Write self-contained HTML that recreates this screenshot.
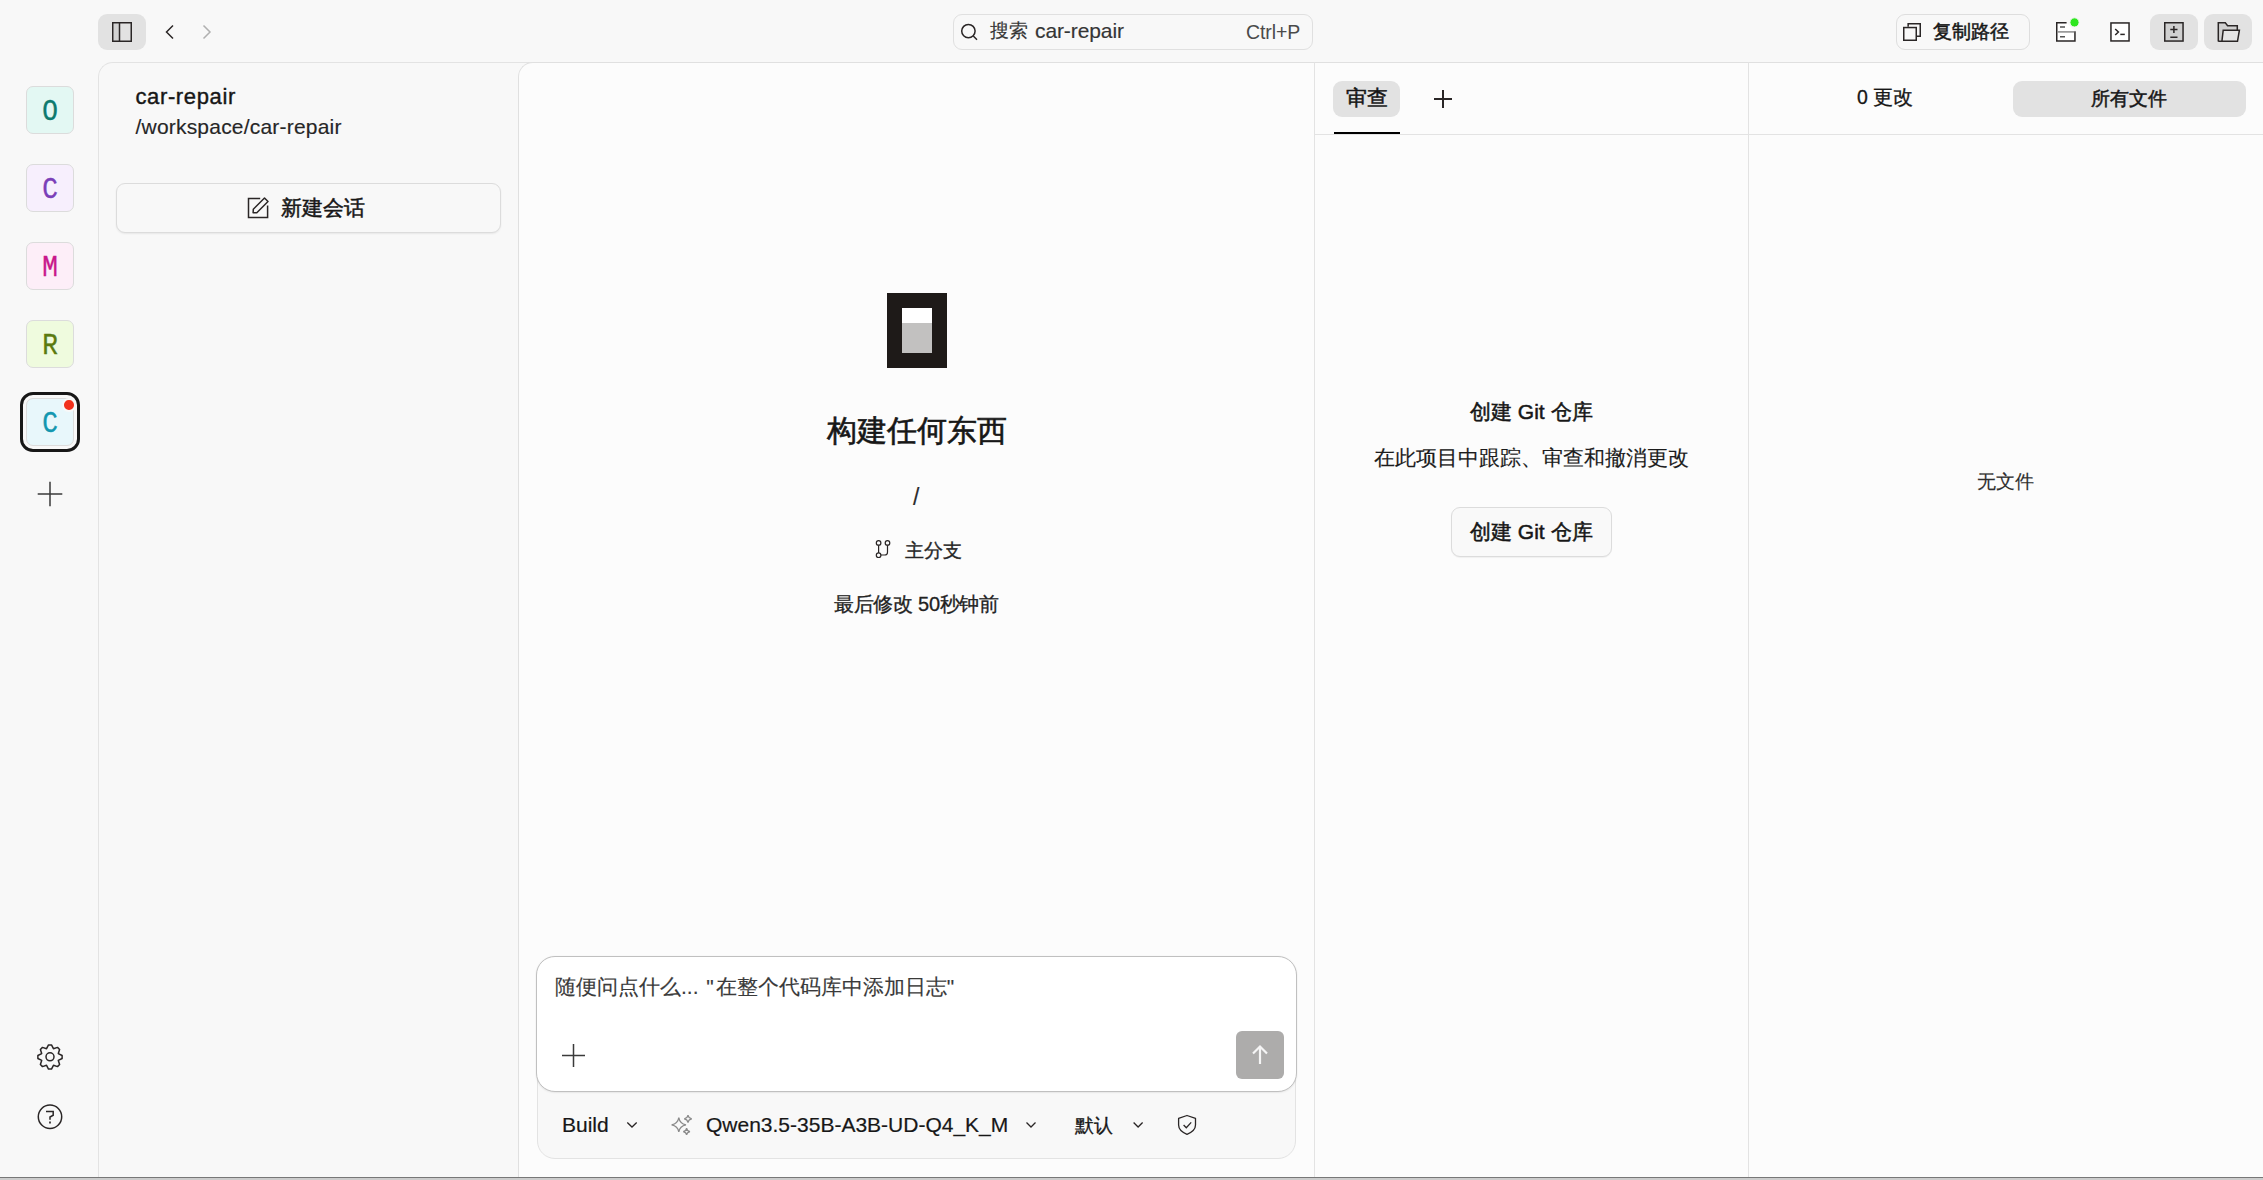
<!DOCTYPE html>
<html><head><meta charset="utf-8">
<style>
html,body{margin:0;padding:0;width:2263px;height:1180px;overflow:hidden;background:#f8f8f8;font-family:"Liberation Sans",sans-serif;color:#171717}
.a{position:absolute}
.t{position:absolute;white-space:nowrap;line-height:1;-webkit-text-stroke:0.15px currentColor}
.av{position:absolute;left:26px;width:46px;height:46px;border:1px solid #dcdcdc;border-radius:7px;font-family:"Liberation Mono",monospace;font-size:30px;text-align:center;line-height:50px;-webkit-text-stroke:0.35px currentColor}
.av span{display:inline-block;transform:scaleX(0.87)}
.btn{position:absolute;border-radius:9px;background:#e2e2e2}
.m{-webkit-text-stroke:0.5px currentColor}
.ml{-webkit-text-stroke:0.2px currentColor}
</style></head><body>

<!-- top bar -->
<div class="btn" style="left:98px;top:14px;width:48px;height:36px"></div>
<div class="a" style="left:953px;top:14px;width:358px;height:34px;border:1px solid #e0e0e0;border-radius:9px;background:#f8f8f8"></div>
<div class="t" style="left:990px;top:21px;font-size:19px;color:#353535">搜索</div><div class="t" style="left:1035px;top:20px;font-size:21px;letter-spacing:-0.1px;color:#353535">car-repair</div>
<div class="t" style="left:1246px;top:23px;font-size:19.5px;letter-spacing:-0.1px;color:#4a4a4a;-webkit-text-stroke:0">Ctrl+P</div>

<div class="a" style="left:1896px;top:14px;width:132px;height:34px;border:1px solid #dedede;border-radius:9px"></div>
<div class="t m" style="left:1933px;top:22px;font-size:19.25px;color:#171717">复制路径</div>
<div class="btn" style="left:2150px;top:14px;width:48px;height:36px"></div>
<div class="btn" style="left:2204px;top:14px;width:48px;height:36px"></div>

<!-- left rail -->
<div class="av" style="top:86px;background:#e3f8f3;color:#0e7a6e"><span>O</span></div>
<div class="av" style="top:164px;background:#f7effd;color:#7b3fb8"><span>C</span></div>
<div class="av" style="top:242px;background:#fdeef8;color:#c8188b"><span>M</span></div>
<div class="av" style="top:320px;background:#effbde;color:#5b7a10"><span>R</span></div>
<div class="a" style="left:20px;top:392px;width:54px;height:54px;border:3px solid #171717;border-radius:13px"></div>
<div class="av" style="top:398px;background:#e8f7fb;color:#1497b0"><span>C</span></div>

<div class="a" style="left:62px;top:398px;width:9.5px;height:9.5px;border-radius:50%;background:#f2311d;border:2px solid #f8f8f8"></div>
<!-- sidebar panel -->
<div class="a" style="left:98px;top:62px;width:480px;height:1200px;border-left:1px solid #e3e3e3;border-top:1px solid #e3e3e3;border-top-left-radius:15px;background:#f8f8f8"></div>
<div class="t" style="left:135.5px;top:86px;font-size:22px;letter-spacing:0.62px;color:#171717;-webkit-text-stroke:0.4px #171717">car-repair</div>
<div class="t" style="left:135.5px;top:116px;font-size:21px;letter-spacing:0.2px;color:#262626">/workspace/car-repair</div>
<div class="a" style="left:116px;top:183px;width:383px;height:48px;border:1px solid #dcdcdc;border-radius:9px;background:#f8f8f8;box-shadow:0 1px 2px rgba(0,0,0,0.07)"></div>
<div class="t m" style="left:281px;top:197px;font-size:21px;color:#171717">新建会话</div>

<!-- center panel -->
<div class="a" style="left:518px;top:62px;width:795px;height:1200px;border-left:1px solid #e0e0e0;border-top:1px solid #e0e0e0;border-right:1px solid #e3e3e3;border-top-left-radius:15px;background:#fcfcfc"></div>

<!-- logo -->
<div class="a" style="left:887px;top:293px;width:60px;height:75px;background:#1e1a18"></div>
<div class="a" style="left:902px;top:308px;width:30px;height:15px;background:#ffffff"></div>
<div class="a" style="left:902px;top:323px;width:30px;height:30px;background:#c2c1c0"></div>

<div class="t m" style="left:827px;top:416px;font-size:30px;color:#171717;-webkit-text-stroke:0.6px #171717">构建任何东西</div>
<div class="t" style="left:913px;top:486px;font-size:23px;color:#2b2b2b">/</div>
<div class="t" style="left:905px;top:541px;font-size:19px;color:#262626;-webkit-text-stroke:0.35px #262626">主分支</div>
<div class="t" style="left:834px;top:594px;font-size:20px;letter-spacing:-0.3px;color:#222;-webkit-text-stroke:0.3px #222">最后修改 50秒钟前</div>

<!-- prompt -->
<div class="a" style="left:537px;top:1060px;width:757px;height:97px;border:1px solid #e3e3e3;border-radius:0 0 18px 18px;background:#f8f8f8"></div>
<div class="a" style="left:536px;top:956px;width:759px;height:134px;border:1px solid #c0c0c0;border-radius:19px;background:#ffffff;box-shadow:0 0 2px rgba(0,0,0,0.05),0 1px 2px rgba(0,0,0,0.06)"></div>
<div class="t" style="left:555px;top:976px;font-size:21px;color:#3a3a3a">随便问点什么...<span style="letter-spacing:2px"> "</span>在整个代码库中添加日志"</div>
<div class="a" style="left:1236px;top:1031px;width:48px;height:48px;border-radius:6px;background:#adacab"></div>
<div class="t ml" style="left:562px;top:1114px;font-size:21px;color:#171717">Build</div>
<div class="t ml" style="left:706px;top:1114px;font-size:21px;color:#171717">Qwen3.5-35B-A3B-UD-Q4_K_M</div>
<div class="t" style="left:1075px;top:1116px;font-size:19px;color:#171717;-webkit-text-stroke:0.3px #171717">默认</div>

<!-- review panel -->
<div class="a" style="left:1314px;top:62px;width:433px;height:1200px;border-top:1px solid #e0e0e0;border-left:1px solid #e3e3e3;background:#fcfcfc"></div>
<div class="a" style="left:1748px;top:62px;width:515px;height:1200px;border-top:1px solid #e0e0e0;border-left:1px solid #e3e3e3;background:#fcfcfc"></div>
<div class="a" style="left:1314px;top:134px;width:949px;height:1px;background:#e3e3e3"></div>
<div class="btn" style="left:1333px;top:81px;width:67px;height:36px"></div>
<div class="a" style="left:1334px;top:132px;width:66px;height:2px;background:#000"></div>
<div class="t m" style="left:1346px;top:87px;font-size:21px;color:#171717">审查</div>
<div class="t" style="left:1857px;top:88px;font-size:19.5px;color:#171717;-webkit-text-stroke:0.3px #171717">0 更改</div>
<div class="btn" style="left:2013px;top:81px;width:233px;height:36px"></div>
<div class="t m" style="left:2091px;top:89px;font-size:19.25px;color:#171717">所有文件</div>

<div class="t m" style="left:1470px;top:401px;font-size:21px;color:#171717">创建 Git 仓库</div>
<div class="t" style="left:1374px;top:447px;font-size:21px;color:#1c1c1c">在此项目中跟踪、审查和撤消更改</div>
<div class="a" style="left:1451px;top:507px;width:159px;height:48px;border:1px solid #dcdcdc;border-radius:9px;background:#f9f9f9;box-shadow:0 1px 1px rgba(0,0,0,0.05)"></div>
<div class="t m" style="left:1470px;top:521px;font-size:21px;color:#171717">创建 Git 仓库</div>
<div class="t" style="left:1977px;top:472px;font-size:19px;color:#2f2f2f">无文件</div>

<div class="a" style="left:0;top:1177px;width:2263px;height:1px;background:#777"></div>
<div class="a" style="left:0;top:1178px;width:2263px;height:2px;background:#cccccc"></div>
<!-- icons overlay -->
<svg class="a" style="left:0;top:0" width="2263" height="1180" fill="none" stroke="#2a2626" stroke-width="1.5" stroke-linecap="butt" stroke-linejoin="miter">
<!-- sidebar toggle -->
<rect x="113.5" y="23.5" width="6" height="18" fill="#d2d2d2" stroke="none"/>
<rect x="112.75" y="22.75" width="18.5" height="18.5"/>
<path d="M119.5 22.75V41.25"/>
<!-- chevrons -->
<path d="M173 25.5L166.5 32L173 38.5"/>
<path d="M203.5 25.5L210 32L203.5 38.5" stroke="#b0b0b0"/>
<!-- search -->
<circle cx="968.4" cy="31.1" r="6.7" stroke-width="1.5"/>
<path d="M973.3 36L977 39.7"/>
<!-- copy -->
<path d="M1908.15 26.8V23.75H1920.25V36.15H1917"/>
<rect x="1903.75" y="27.55" width="12.5" height="12.7"/>
<!-- status -->
<path d="M2066.6 22.65H2056.75V40.95H2074.95V31.2" fill="#ffffff"/>
<path d="M2057.5 31.9H2074.2" stroke="#8a8a8a"/>
<path d="M2060 27H2065M2060 36.7H2065" stroke="#555"/>
<circle cx="2074.5" cy="22.4" r="4.6" fill="#2ee620" stroke="#f8f8f8" stroke-width="1"/>
<!-- terminal -->
<rect x="2110.95" y="22.95" width="18.1" height="18" fill="#ffffff"/>
<path d="M2115.2 29L2118.4 32L2115.2 35"/>
<path d="M2120.3 34.4H2124.8"/>
<!-- plus/minus -->
<rect x="2164.75" y="22.75" width="18.3" height="18.3" fill="#d0d0d0"/>
<path d="M2170.3 29.55H2177.5M2173.9 26V33.1M2170.3 37.2H2177.5"/>
<!-- folder -->
<path d="M2218.3 41.5V22.75H2225.3L2227.6 25.75H2237.3V30" fill="#d0d0d0"/>
<path d="M2223.2 30.2H2239.4L2237.5 41.3H2218.3L2221.9 41.3Z" fill="#e6e6e6"/>
<!-- rail plus -->
<path d="M37.7 494H62.3M50 481.7V506.3" stroke="#3a3a3a"/>
<!-- gear -->
<path d="M48.51,1044.89 L51.49,1044.89 L53.44,1048.69 L57.51,1047.39 L59.61,1049.49 L58.31,1053.56 L62.11,1055.51 L62.11,1058.49 L58.31,1060.44 L59.61,1064.51 L57.51,1066.61 L53.44,1065.31 L51.49,1069.11 L48.51,1069.11 L46.56,1065.31 L42.49,1066.61 L40.39,1064.51 L41.69,1060.44 L37.89,1058.49 L37.89,1055.51 L41.69,1053.56 L40.39,1049.49 L42.49,1047.39 L46.56,1048.69 Z" stroke-linejoin="round"/>
<circle cx="50" cy="1056.8" r="4"/>
<!-- help -->
<circle cx="50" cy="1116.8" r="11.7"/>
<path d="M46 1111.6H53.2V1115.2L50 1117V1119.8"/>
<path d="M50 1121.6V1123.4" stroke-width="1.7"/>
<!-- edit icon -->
<path d="M260.2 198.5H248.5V217.4H267.6V205.4"/>
<path d="M253.1 212.7L253.3 209.2L264.5 198L268 201.5L256.8 212.7Z" stroke-linejoin="round"/>
<!-- branch -->
<circle cx="878.6" cy="542.9" r="2.3" stroke-width="1.2"/>
<circle cx="887.5" cy="542.9" r="2.3" stroke-width="1.2"/>
<circle cx="878.6" cy="555.2" r="2.3" stroke-width="1.2"/>
<path d="M878.6 545.2V552.9M887.5 545.2V552.2Q887.5 555 884.7 555H880.9" stroke-width="1.2"/>
<!-- tab plus -->
<path d="M1434 99H1452M1443 90V108" stroke-width="2" stroke="#2a2626"/>
<!-- prompt plus -->
<path d="M562 1055.5H585M573.5 1044V1067" stroke="#3a3a3a"/>
<!-- send arrow -->
<path d="M1253 1053.5L1260 1046.5L1267 1053.5M1260 1047V1064" stroke="#f5f5f5" stroke-width="2.2"/>
<!-- chevrons small -->
<path d="M627.3 1122.5L632 1127L636.7 1122.5M1026.5 1122.5L1031 1127L1035.5 1122.5M1133.6 1122.5L1138.1 1127L1142.6 1122.5" stroke="#2a2626" stroke-width="1.3"/>
<!-- sparkle -->
<path d="M678.8 1117.5Q679.8 1123.8 686 1124.8Q679.8 1125.8 678.8 1132Q677.8 1125.8 671.6 1124.8Q677.8 1123.8 678.8 1117.5Z" stroke="#8a8a8a" stroke-width="1.3"/>
<path d="M688 1115Q688.5 1118.3 691.8 1118.8Q688.5 1119.3 688 1122.6Q687.5 1119.3 684.2 1118.8Q687.5 1118.3 688 1115Z" stroke="#8a8a8a" stroke-width="1.2"/>
<path d="M686.6 1128.2Q687 1131.2 690 1131.6Q687 1132 686.6 1135Q686.2 1132 683.2 1131.6Q686.2 1131.2 686.6 1128.2Z" stroke="#8a8a8a" stroke-width="1.2"/>
<!-- shield -->
<path d="M1187 1115.5L1178.6 1118.4V1125Q1178.6 1130.8 1187 1134.3Q1195.5 1130.8 1195.5 1125V1118.4Z" stroke-width="1.3" stroke-linejoin="round"/>
<path d="M1183.6 1125L1186.3 1127.7L1191.2 1122.4" stroke-width="1.3"/>
</svg>
</body></html>
